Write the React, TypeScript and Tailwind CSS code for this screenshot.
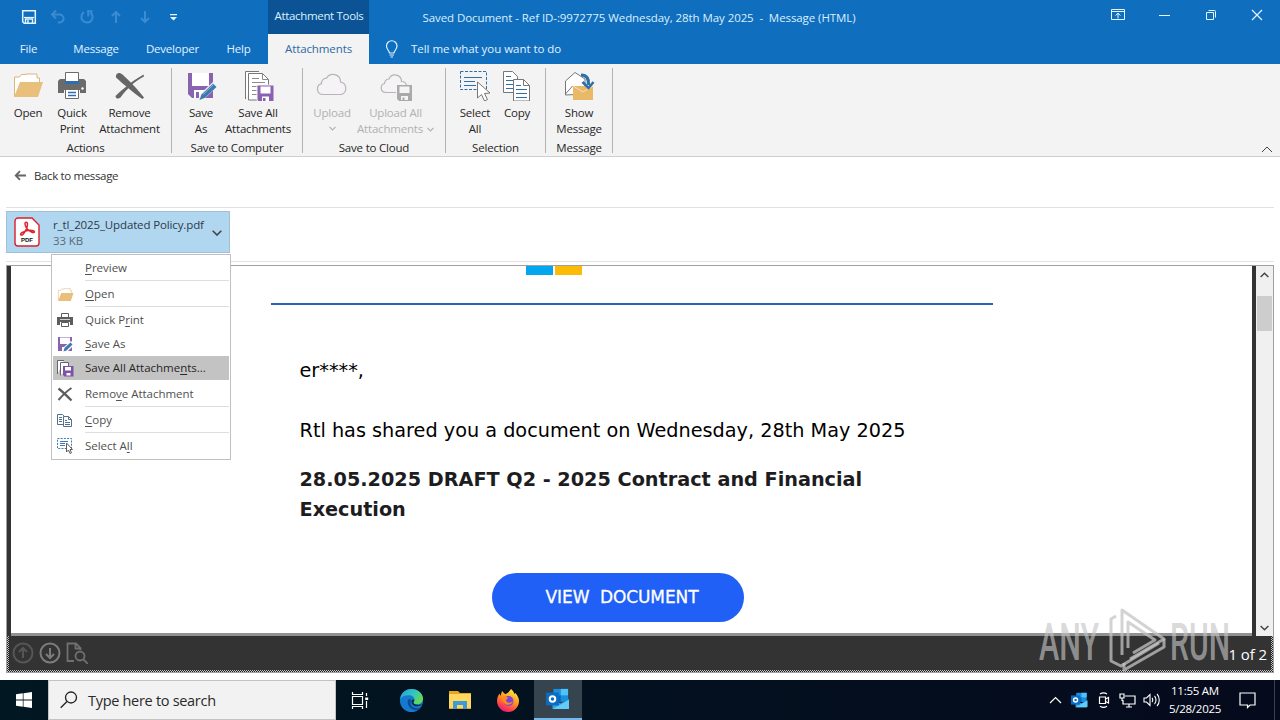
import React from "react";

type IconProps = { className?: string };

/* ---------- Quick access + window icons ---------- */

function SaveGlyph() {
  return (
    <svg width="16" height="16" viewBox="0 0 16 16" fill="none" stroke="#e4f6ff" strokeWidth="1.5">
      <path d="M1.7 1.7h12.6v12.6H3.2L1.7 12.8z" />
      <path d="M3 8.5h10" strokeWidth="1.2" />
      <path d="M4.5 14v-4h7v4M7 11v3" strokeWidth="1.4" />
    </svg>
  );
}

function UndoGlyph() {
  return (
    <svg width="16" height="16" viewBox="0 0 16 16" fill="none" stroke="#3a8cd2" strokeWidth="2">
      <path d="M6 1.500 2 5.500l4 4M2.500 5.500h6.800a4.300 4 0 0 1 0 8H8" />
    </svg>
  );
}

function RedoGlyph() {
  return (
    <svg width="16" height="16" viewBox="0 0 16 16" fill="none" stroke="#3a8cd2" strokeWidth="2">
      <path d="M5 3.200A5.600 5.600 0 1 0 11.500 3.600M8 2.300h5.500M9.300 2v5.500" />
    </svg>
  );
}

function ArrowGlyph({ className }: IconProps) {
  return (
    <svg className={className} width="12" height="14" viewBox="0 0 12 14" fill="none" stroke="#3a8cd2" strokeWidth="2">
      <path d="M6 13V2M2 6l4-4 4 4" />
    </svg>
  );
}

/* ---------- Ribbon icons, 32px grid ---------- */

function FolderIcon({ className = "w-8 h-8" }: IconProps) {
  return (
    <svg className={className} viewBox="0 0 32 32">
      <path d="M2.500 27V8h5l2-2.500H14V5h11v4h2.500v8" fill="#fff" stroke="#dcb67a" strokeWidth="1" />
      <path d="M2 28 8 13h23l-5 15z" fill="#e9c07b" />
    </svg>
  );
}

function PrintIcon({ className = "w-8 h-8" }: IconProps) {
  return (
    <svg className={className} viewBox="0 0 32 32">
      <path d="M4 10h5v4h14v-4h5l2 2v12h-6v-3H8v3H2V12z" fill="#6b6b6b" />
      <path d="M9.500 3.500h13v10h-13z" fill="#fff" stroke="#6b6b6b" />
      <path d="M9 12h14v3H9z" fill="#2f6fb0" />
      <circle cx="26.500" cy="19.500" r="1.200" fill="#fff" />
      <path d="M9.500 20.500h13v9h-13z" fill="#fff" stroke="#6b6b6b" />
      <path d="M12 23.500h8M12 26.500h8" stroke="#2f6fb0" strokeWidth="1.300" />
    </svg>
  );
}

function RemoveIcon({ className = "w-8 h-8" }: IconProps) {
  return (
    <svg className={className} viewBox="0 0 32 32" fill="#666">
      <path d="M2 6.500C2.500 3.500 6 3 8.500 5.500 15 11.500 24 20.500 30 28.500l-1.500 1.500C21 25 9 15 2 8.500z" />
      <path d="M29.500 5.500 28 6.500C18 12 9 20 1.500 27c0 2.500 2.500 3.500 5 1.500C13 20 20 12.500 30 7.500z" />
    </svg>
  );
}

function SaveAsIcon() {
  return (
    <svg className="w-8 h-8" viewBox="0 0 32 32">
      <path d="M3 4h25v25H7l-4-4z" fill="#8a63b0" />
      <path d="M7 4h17v13H7z" fill="#fff" />
      <path d="M9 21h11v8H9z" fill="#fff" />
      <path d="M11 23h3v6h-3z" fill="#8a63b0" />
      <path d="M13 32l2-7L28 13l5 4-13 12z" fill="#f3f3f3" />
      <path d="M14.500 31l2-5.500L28 14.500l3.500 3.500L20 28.800z" fill="#3f77b0" />
      <path d="M18 25.500 28.500 15.500" stroke="#8db7de" />
    </svg>
  );
}

function SaveAllIcon() {
  return (
    <svg className="w-8 h-8" viewBox="0 0 32 32">
      <path d="M3.500 30V2.500H17M6.500 31V4.500h14l6 6V31z" fill="#fff" stroke="#777" />
      <path d="M20.500 4.500v6h6M10 9.500h7M10 13.500h13M10 17.500h7M10 21.500h6M10 25.500h6" fill="none" stroke="#8a8a8a" />
      <path d="M15 16h17v17H17l-2-2z" fill="#8a63b0" stroke="#f3f3f3" />
      <path d="M18.500 17.500h10v7h-10zM20 27.500h7V32h-7z" fill="#fff" />
      <path d="M21 29h2.500v3H21z" fill="#8a63b0" />
    </svg>
  );
}

function CloudIcon() {
  return (
    <svg className="w-8 h-8" viewBox="0 0 32 32" fill="#f5f3f5" stroke="#b7b5b7" strokeWidth="1.200">
      <path d="M7 25.500a5.500 5.500 0 0 1-1.500-10.800 5 5 0 0 1 5-5.500 7.500 7.500 0 0 1 14 3.800 6.500 6.500 0 0 1 1 12.500z" />
    </svg>
  );
}

function CloudSaveIcon() {
  return (
    <svg className="w-8 h-8" viewBox="0 0 32 32">
      <path d="M16 23.500H5.500a4.600 4.600 0 0 1-1-9 4.500 4.500 0 0 1 4.500-4.500 6.500 6.500 0 0 1 12.500 2.500c2.500 0 4.500 1.500 5 3.500" fill="#f5f3f5" stroke="#b7b5b7" strokeWidth="1.200" />
      <path d="M17 16h16v16H19l-2-2z" fill="#aaa" />
      <path d="M19.500 17.500h10v6.500h-10zM21 27h7v4h-7z" fill="#f5f5f5" />
      <path d="M22.500 28.500h2V31h-2z" fill="#aaa" />
    </svg>
  );
}

function SelectIcon() {
  return (
    <svg className="w-8 h-8" viewBox="0 0 32 32">
      <path d="M1.500 2.500h26v18h-26z" fill="none" stroke="#2f6fa8" strokeDasharray="3 1.500" />
      <path d="M5 8.500h18M5 12.500h11M5 16.500h12" stroke="#2f6fa8" />
      <path d="M18.500 13v16l4-3.500 3 6.500 3-1.500-3-6 5.500-.5z" fill="#fff" stroke="#777" />
    </svg>
  );
}

function CopyIcon() {
  return (
    <svg className="w-8 h-8" viewBox="0 0 32 32">
      <path d="M2.500 2.500h9l5 5v16h-14z" fill="#fff" stroke="#777" />
      <path d="M5 7.500h5M5 11.500h9M5 15.500h9M5 19.500h9" stroke="#2f6fa8" />
      <path d="M12.500 10.500h10l6 6V32h-16z" fill="#fff" stroke="#777" />
      <path d="M22.500 10.500v6h6" fill="none" stroke="#777" />
      <path d="M15 16.500h5M15 20.500h11M15 24.500h11M15 28.500h11" stroke="#2f6fa8" />
    </svg>
  );
}

function ShowMessageIcon() {
  return (
    <svg className="w-8 h-8" viewBox="0 0 32 32">
      <path d="M2.500 26V12L12 3.500 22 10v15z" fill="#fff" stroke="#777" />
      <path d="M2.500 25l7-8" fill="none" stroke="#777" />
      <path d="M10 17h20v14H10z" fill="#e9b967" />
      <path d="M10 17l10 6 10-6" fill="none" stroke="#f7e0b8" />
      <path d="M18 6c6 0 8 4 7.500 10" fill="none" stroke="#2f6fa8" strokeWidth="3.200" />
      <path d="M19.500 13l6 6 5-6" fill="none" stroke="#2f6fa8" strokeWidth="2.500" />
    </svg>
  );
}

/* ---------- Menu icons, 16px grid ---------- */

function SmallPrintIcon() {
  return (
    <svg width="16" height="16" viewBox="0 0 16 16">
      <path d="M0 5h16v8h-3v-3H3v3H0z" fill="#5d5d5d" />
      <path d="M4.500 1.500h7v4h-7z" fill="#fff" stroke="#5d5d5d" />
      <path d="M3 7.500h10" stroke="#cfcfcf" />
      <path d="M4.500 10.500h7v4h-7z" fill="#fff" stroke="#5d5d5d" />
    </svg>
  );
}

function SmallSaveAsIcon() {
  return (
    <svg width="16" height="16" viewBox="0 0 16 16">
      <path d="M1 1h14v14H1z" fill="#8a63b0" />
      <path d="M3 1.500h10V8H3zM5 11h6v4H5z" fill="#fff" />
      <path d="M5 16l2-5 7-6 2 2v3l-6 6z" fill="#fff" />
      <path d="M6.500 15.500l1-3.500L13.500 6.500l2 2-6 6z" fill="#3f77b0" />
    </svg>
  );
}

function SmallSaveAllIcon() {
  return (
    <svg width="17" height="17" viewBox="0 0 17 17">
      <path d="M.5 14V.5H7M3.500 15.500v-13h8V7" fill="#fff" stroke="#666" />
      <path d="M6 6h10.500v10.500H7.500L6 15z" fill="#7d52a8" />
      <path d="M8 7h6v3.500H8zM9.500 13h4v2.500h-4z" fill="#fff" />
    </svg>
  );
}

function SmallRemoveIcon() {
  return (
    <svg width="16" height="16" viewBox="0 0 16 16" fill="none" stroke="#5d5d5d">
      <path d="M1.500 2.500C6 6 10 10 14.500 14.500" strokeWidth="2.300" />
      <path d="M14.500 2C9 5.500 5 10 1.500 14" strokeWidth="2" />
    </svg>
  );
}

function SmallCopyIcon() {
  return (
    <svg width="16" height="16" viewBox="0 0 16 16" stroke="#54718c">
      <path d="M.5 2.500h5l2 2v8h-7z" fill="#fff" />
      <path d="M2 5.500h3M2 7.500h3M2 9.500h3" />
      <path d="M6.500 4.500h5l3 3v7h-8z" fill="#fff" />
      <path d="M11.500 4.500v3h3M8 8.500h2M8 10.500h5M8 12.500h5" fill="none" />
    </svg>
  );
}

function SmallSelectIcon() {
  return (
    <svg width="16" height="16" viewBox="0 0 16 16" fill="none" stroke="#3d79b3">
      <path d="M.5.500h14v10H.5z" strokeDasharray="2 1.200" />
      <path d="M3 3.500h8M3 5.500h5M3 7.500h5" />
      <path d="M9.500 5v9l2-2 1.500 3.500 1.500-.7L13 11.500h2.500z" fill="#fff" stroke="#5d5d5d" />
    </svg>
  );
}

function PdfIcon() {
  return (
    <svg width="26" height="30" viewBox="0 0 26 30">
      <path d="M4 1h14l7 7v18a3 3 0 0 1-3 3H4a3 3 0 0 1-3-3V4a3 3 0 0 1 3-3z" fill="#fff" stroke="#d8202a" strokeWidth="1.400" />
      <path d="M11.500 5.500c2-1 2.500 1.500 1.500 4.500-1 3.500-3.500 7.500-5 8-2 .5-2-1.500.5-2.700 3.500-1.800 8.500-2.500 11-1.500 2 1 .5 2.300-1.500 1.500-3-1.200-6-4.500-6.800-7.200-.4-1.300-.3-2.300.3-2.600z" fill="none" stroke="#e0202a" strokeWidth="1.500" />
      <text x="13" y="25" textAnchor="middle" fontFamily="Liberation Sans" fontWeight="700" fontSize="6" letterSpacing="0" fill="#111">PDF</text>
    </svg>
  );
}

/* ---------- Taskbar icons ---------- */

function EdgeIcon() {
  return (
    <svg width="25" height="25" viewBox="0 0 26 26">
      <defs>
        <linearGradient id="edgeTop" x1="0" y1="0" x2="1" y2="0.500">
          <stop offset="0" stopColor="#1f9fe0" />
          <stop offset="0.600" stopColor="#35c6c0" />
          <stop offset="1" stopColor="#62d957" />
        </linearGradient>
      </defs>
      <circle cx="13" cy="13" r="12" fill="#1479cf" />
      <path d="M1 12C2 5 7 1 13 1c7 0 12 5 12 10 0 4-3 6-6 6-3 0-4-1-4-2s1-1.500 1-3c0-2.500-2-4.500-6-4.500-5 0-8 2-9 4.500z" fill="url(#edgeTop)" />
      <path d="M9 14c0 6 5 9 9 9 2 0 4-1 5-3-2 1-4 1.200-6 .8C13 20 11 17 12.500 12 10.500 11 9 12 9 14z" fill="#0b4d8f" />
      <path d="M13 14c0 3 2.500 5 6 5 2 0 4-.5 5-2.500-1 .8-3 1.200-5 1-2.500-.2-4-1.300-4-2.500 0-1 1-1.500 1-3-1.500-.5-3 .5-3 2z" fill="#07263f" />
    </svg>
  );
}

function ExplorerIcon() {
  return (
    <svg width="24" height="22" viewBox="0 0 24 22">
      <path d="M1 2h9l2 2h11v16H1z" fill="#e9a520" />
      <path d="M1 5h22v14H1z" fill="#ffd75e" />
      <path d="M5 12h14v8h-4v-4H9v4H5z" fill="#3f9ad8" />
    </svg>
  );
}

function FirefoxIcon() {
  return (
    <svg width="24" height="25" viewBox="0 0 24 25">
      <defs>
        <linearGradient id="fox" x1="0.800" y1="0" x2="0.300" y2="1">
          <stop offset="0" stopColor="#fff24a" />
          <stop offset="0.450" stopColor="#ff9a1f" />
          <stop offset="0.800" stopColor="#ff3f4e" />
          <stop offset="1" stopColor="#e31587" />
        </linearGradient>
      </defs>
      <path d="M15 1c2 2 3 3 3.500 5l1-1c2.500 3 3.500 5.500 3.500 8A11 11 0 1 1 1 13c0-3 1-5 2.500-7.500L4.500 8 6 3l3 3c2-.5 4-2 6-5z" fill="url(#fox)" />
      <circle cx="12.500" cy="13" r="5" fill="#7a45d8" />
      <path d="M6 10c2-2 5-2 6 0l-2 2c0 3 4 4 7 1-1 5-10 6-11-3z" fill="#ff8a1f" />
    </svg>
  );
}

function OutlookIcon({ className = "w-6 h-[22px]" }: IconProps) {
  return (
    <svg className={className} viewBox="0 0 26 24">
      <path d="M8 1h16v14H8z" fill="#1a8fe0" />
      <path d="M16 1h8v7h-8z" fill="#4fc3f5" />
      <path d="M8 8h8v7H8z" fill="#0f62b5" />
      <path d="M7 13l9 4 9-5v10a1 1 0 0 1-1 1H7z" fill="#2ea6ea" />
      <path d="M7 23l18-10v9a1 1 0 0 1-1 1z" fill="#63cdf8" />
      <path d="M0 5h14v14H0z" fill="#0b6cc4" />
      <circle cx="7" cy="12" r="3" fill="none" stroke="#fff" strokeWidth="2.200" />
    </svg>
  );
}

/* ---------- Ribbon ---------- */

interface RibbonButtonProps {
  icon: React.ReactNode;
  lines: string[];
  width: string;
  disabled?: boolean;
  caret?: boolean;
}

function RibbonButton({ icon, lines, width, disabled, caret }: RibbonButtonProps) {
  return (
    <button className={`${width} shrink-0 flex flex-col items-center ${disabled ? "text-[#b1b1b1]" : "text-[#262626]"}`}>
      <span className="h-[37px] pb-[3px] flex items-center justify-center">{icon}</span>
      {lines.map((line, i) => (
        <span key={line} className="h-4 leading-4 whitespace-nowrap flex items-center gap-1">
          {line}
          {caret && i === 1 && <Chevron className="w-[7px] h-[5px]" />}
        </span>
      ))}
      {caret && lines.length === 1 && <Chevron className="w-[7px] h-[5px] mt-[5px]" />}
    </button>
  );
}

function Chevron({ className }: IconProps) {
  return (
    <svg className={className} viewBox="0 0 10 6" fill="none" stroke="currentColor" strokeWidth="1.600">
      <path d="M.7.700 5 5 9.300.700" />
    </svg>
  );
}

interface RibbonGroupProps {
  label: string;
  width: string;
  padding: string;
  children: React.ReactNode;
}

function RibbonGroup({ label, width, padding, children }: RibbonGroupProps) {
  return (
    <div className={`${width} shrink-0 h-[85px] mt-1 border-r border-[#b3b3b3] flex flex-col`}>
      <div className={`flex h-[73px] shrink-0 items-start ${padding}`}>{children}</div>
      <div className="h-3 leading-[14px] text-center text-[#262626]">{label}</div>
    </div>
  );
}

/* ---------- Context menu ---------- */

const menuItems = [
  { before: "", key: "P", after: "review", icon: null, line: true },
  { before: "", key: "O", after: "pen", icon: <FolderIcon className="w-[17px] h-[17px]" />, line: true },
  { before: "Quick P", key: "r", after: "int", icon: <SmallPrintIcon /> },
  { before: "", key: "S", after: "ave As", icon: <SmallSaveAsIcon /> },
  { before: "Save All Attachme", key: "n", after: "ts...", icon: <SmallSaveAllIcon />, active: true, space: true },
  { before: "Remo", key: "v", after: "e Attachment", icon: <SmallRemoveIcon />, line: true },
  { before: "", key: "C", after: "opy", icon: <SmallCopyIcon />, line: true },
  { before: "Select A", key: "l", after: "l", icon: <SmallSelectIcon /> },
];

function AttachmentMenu() {
  return (
    <div className="absolute left-[45px] top-[43px] z-10 w-[180px] h-[206px] bg-white border border-[#c0c0c0] pt-px px-px tracking-[-0.02px]">
      {menuItems.map((item) => (
        <React.Fragment key={item.before + item.key + item.after}>
          <div className={`h-6 flex items-center ${item.active ? "bg-[#c3c3c3] text-[#262626]" : "text-[#505050]"}`}>
            <span className="w-8 pl-1 flex items-center">{item.icon}</span>
            <span className="whitespace-pre">
              {item.before}
              <span className="underline underline-offset-2">{item.key}</span>
              {item.after}
            </span>
          </div>
          {item.line && <div className="h-0.5 ml-8 border-t border-[#dedede]" />}
          {item.space && <div className="h-0.5" />}
        </React.Fragment>
      ))}
    </div>
  );
}

/* ---------- Sections ---------- */

function TitleBar() {
  return (
    <div className="h-[34px] shrink-0 flex items-stretch bg-[#106ebe] text-[#d8f0ff]">
      <div className="w-[268px] flex items-center pl-[21px] gap-[13px]">
        <SaveGlyph />
        <UndoGlyph />
        <RedoGlyph />
        <ArrowGlyph className="ml-[2px]" />
        <ArrowGlyph className="ml-1 rotate-180" />
        <svg className="ml-1.5" width="7" height="7" viewBox="0 0 7 7" fill="#e4f6ff">
          <path d="M0 0h7v1.200H0zM0 3h7L3.500 6.500z" />
        </svg>
      </div>
      <div className="w-[101px] bg-[#0b5394] flex items-center justify-center pb-0.5 pl-px whitespace-nowrap tracking-[-0.33px]">Attachment Tools</div>
      <div className="w-[540px] flex items-center justify-center whitespace-pre pt-0.5 tracking-[-0.08px]">
        Saved Document - Ref ID-:9972775 Wednesday, 28th May 2025  -  Message (HTML)
      </div>
      <div className="flex-1 flex items-center justify-end pr-[17px] pb-1">
        <svg width="14" height="12" viewBox="0 0 14 12" fill="none" stroke="#e4f6ff">
          <path d="M.5.500h13v10H.5zM.5 2.500h13M7 9.500V4M4.500 6.500 7 4.200l2.500 2.300" />
        </svg>
        <svg className="ml-[34px]" width="11" height="11" viewBox="0 0 11 11" stroke="#e4f6ff">
          <path d="M0 5.500h11" />
        </svg>
        <svg className="ml-[35px]" width="12" height="12" viewBox="0 0 12 12" fill="none" stroke="#e4f6ff">
          <path d="M1.500 3.500h7v7h-7zM3.500 1.500h6a1 1 0 0 1 1 1v6" />
        </svg>
        <svg className="ml-[34px]" width="12" height="12" viewBox="0 0 12 12" fill="none" stroke="#e4f6ff" strokeWidth="1.200">
          <path d="M1 1l10 10M11 1 1 11" />
        </svg>
      </div>
    </div>
  );
}

function TabBar() {
  return (
    <div className="h-[30px] shrink-0 flex bg-[#106ebe] text-[#e0f3ff] leading-[30px] whitespace-nowrap">
      <div className="w-[57px] text-center">File</div>
      <div className="w-[78px] text-center">Message</div>
      <div className="w-[76px] text-center pr-px">Developer</div>
      <div className="w-[57px] text-center pr-0.5">Help</div>
      <div className="w-[101px] text-center tracking-[-0.1px] bg-[#f3f3f3] text-[#2f6aa3]">Attachments</div>
      <div className="flex items-center pl-4">
        <svg width="14" height="18" viewBox="0 0 14 18" fill="none" stroke="#e4f6ff" strokeWidth="1.200">
          <path d="M4.500 13c0-2-3-3.500-3-7a5.200 5.200 0 0 1 10.500 0c0 3.500-3 5-3 7zM4.500 15h4.500M5.500 17h2.500" />
        </svg>
        <span className="ml-3 tracking-[-0.04px]">Tell me what you want to do</span>
      </div>
    </div>
  );
}

function Ribbon() {
  return (
    <div className="h-[93px] shrink-0 flex bg-[#f3f3f3] border-b border-[#cfcfcf]">
      <RibbonGroup label="Actions" width="w-[172px]" padding="pl-[7px]">
        <RibbonButton icon={<FolderIcon />} lines={["Open"]} width="w-[42px]" />
        <RibbonButton icon={<PrintIcon />} lines={["Quick", "Print"]} width="w-[46px]" />
        <RibbonButton icon={<RemoveIcon />} lines={["Remove", "Attachment"]} width="w-[69px]" />
      </RibbonGroup>
      <RibbonGroup label="Save to Computer" width="w-[131px]" padding="pl-[10px]">
        <RibbonButton icon={<SaveAsIcon />} lines={["Save", "As"]} width="w-[38px]" />
        <RibbonButton icon={<SaveAllIcon />} lines={["Save All", "Attachments"]} width="w-[76px]" />
      </RibbonGroup>
      <RibbonGroup label="Save to Cloud" width="w-[143px]" padding="pl-[4px]">
        <RibbonButton icon={<CloudIcon />} lines={["Upload"]} width="w-[50px]" disabled caret />
        <RibbonButton icon={<CloudSaveIcon />} lines={["Upload All", "Attachments"]} width="w-[77px]" disabled caret />
      </RibbonGroup>
      <RibbonGroup label="Selection" width="w-[100px]" padding="pl-[10px]">
        <RibbonButton icon={<SelectIcon />} lines={["Select", "All"]} width="w-[38px]" />
        <RibbonButton icon={<CopyIcon />} lines={["Copy"]} width="w-[46px]" />
      </RibbonGroup>
      <RibbonGroup label="Message" width="w-[67px]" padding="pl-[8px]">
        <RibbonButton icon={<ShowMessageIcon />} lines={["Show", "Message"]} width="w-[50px]" />
      </RibbonGroup>
      <svg className="ml-auto mr-[7px] mt-[82px]" width="12" height="7" viewBox="0 0 12 7" fill="none" stroke="#444">
        <path d="M1 6l5-5 5 5" />
      </svg>
    </div>
  );
}

function AttachmentStrip() {
  return (
    <div className="h-[55px] shrink-0 mx-[6px] border-y border-[#e1e1e1] pt-[3px]">
      <div className="relative w-[224px]">
        <div className="h-[42px] bg-[#b1d6f0] border border-[#9fc0d8] flex items-center">
          <span className="ml-[7px]"><PdfIcon /></span>
          <div className="ml-[13px] pt-[2px] flex-1 leading-4 whitespace-nowrap tracking-[-0.13px]">
            <div className="text-[#2c3a4a]">r_tl_2025_Updated Policy.pdf</div>
            <div className="text-[#5b6b78]">33 KB</div>
          </div>
          <Chevron className="w-[10px] h-[6px] mr-[7px] mt-[2px] text-[#444]" />
        </div>
        <AttachmentMenu />
      </div>
    </div>
  );
}

function DocumentViewer() {
  return (
    <div className="h-[408px] mt-[3px] mx-[6px] shrink-0 border border-[#a0a0a0] flex flex-col bg-[#333]">
      <div className="h-[370px] flex">
        <div className="w-[1241px] mx-1 h-[370px] bg-white border-b-[3px] border-[#8f9290] text-black font-['DejaVu_Sans'] text-[19.25px] tracking-normal">
          <div className="flex gap-[2px] ml-[515px]">
            <div className="w-[27px] h-[9px] bg-[#05a6f0]" />
            <div className="w-[27px] h-[9px] bg-[#fcbb06]" />
          </div>
          <div className="ml-[260px] mt-7 w-[722px] h-0.5 bg-[#2b63b8]" />
          <div className="ml-[288.5px] w-[620px]">
            <p className="mt-[51px] leading-[30px]">er****,</p>
            <p className="mt-[30px] leading-[30px] whitespace-nowrap">Rtl has shared you a document on Wednesday, 28th May 2025</p>
            <p className="mt-[19px] leading-[30px] font-bold text-[#1d1d1f] tracking-[-0.02px]">
              28.05.2025 DRAFT Q2 - 2025 Contract and Financial Execution
            </p>
          </div>
          <button className="ml-[481px] mt-[48px] w-[252px] h-[49px] rounded-full bg-[#2160f6] text-white text-[17px] tracking-[-0.1px] [-webkit-text-stroke:0.3px_white] whitespace-pre flex items-center justify-center pl-2 pt-px">
            VIEW  DOCUMENT
          </button>
        </div>
        <div className="w-[17px] bg-[#f0f0f0] flex flex-col items-center text-[#444]">
          <Chevron className="w-[9px] h-[6px] mt-[6px] rotate-180" />
          <div className="w-[15px] h-[35px] mt-[18px] bg-[#cdcdcd]" />
          <Chevron className="w-[9px] h-[6px] mt-auto mb-[5px]" />
        </div>
      </div>
      {/* focus dither around the page toolbar */}
      <div className="h-9 px-0.5 pb-0.5 bg-[repeating-conic-gradient(#c4c4c4_0_25%,#222_0_50%)] bg-[length:2px_2px]">
        <div className="relative h-full bg-[#333] flex items-center pl-[3px] gap-[5px]">
          <svg width="22" height="22" viewBox="0 0 22 22" fill="none" stroke="#565656" strokeWidth="2">
            <circle cx="11" cy="11" r="9.500" />
            <path d="M11 16V6M7 10l4-4 4 4" />
          </svg>
          <svg width="22" height="22" viewBox="0 0 22 22" fill="none" stroke="#7c7c7c" strokeWidth="2">
            <circle cx="11" cy="11" r="9.500" />
            <path d="M11 6v10M7 12l4 4 4-4" />
          </svg>
          <svg width="22" height="22" viewBox="0 0 22 22" fill="none" stroke="#707070" strokeWidth="1.800">
            <path d="M8 19H1.500V1.500H10L14.500 6v2M9.500 2v4.500H14" />
            <circle cx="14" cy="14" r="4.500" />
            <path d="M17.500 17.500 22 22" />
          </svg>
          <Watermark />
          <span className="ml-auto mr-[4px] pt-0.5 text-white text-[15px] tracking-[-0.1px] whitespace-nowrap">1 of 2</span>
        </div>
      </div>
    </div>
  );
}

function Watermark() {
  return (
    <svg
      className="absolute right-[40px] bottom-0 w-[200px] h-[66px] overflow-visible tracking-normal"
      viewBox="0 0 200 66"
      fontFamily="Roboto"
      fontWeight="500"
      fontSize="51"
      fill="#c4c4c4"
      fillOpacity="0.650"
    >
      <text x="8" y="56" textLength="60" lengthAdjust="spacingAndGlyphs">ANY</text>
      <text x="139" y="56" textLength="60" lengthAdjust="spacingAndGlyphs">RUN</text>
      <g fill="none" stroke="#c4c4c4" strokeOpacity="0.750" strokeWidth="3" strokeLinejoin="round">
        <path d="M85 12l-5 3v42l10 5 38-23" />
        <path d="M91 51V6l42 29-34 20" />
        <path d="M97 44V18l27 18-22 13" />
        <path d="M133 35v8L93 66v-7" />
      </g>
    </svg>
  );
}

function Taskbar() {
  return (
    <div className="h-10 mt-auto shrink-0 flex bg-linear-to-r from-[#011722] to-[#050a1c] text-white">
      <div className="w-12 flex items-center justify-center">
        <svg width="16" height="16" viewBox="0 0 16 16" fill="#fff">
          <path d="M0 2.300 6.800 1.300v6.300H0zM7.500 1.200 16 0v7.600H7.500zM0 8.400h6.800v6.300L0 13.700zM7.500 8.400H16V16l-8.500-1.200z" />
        </svg>
      </div>
      <div className="w-72 bg-[#f2f2f2] border border-[#c4c4c4] flex items-center pl-[11px] text-[#2a2a2a]">
        <svg width="18" height="18" viewBox="0 0 18 18" fill="none" stroke="#222" strokeWidth="1.300">
          <circle cx="11" cy="6.500" r="5.500" />
          <path d="M7 10.500.700 16.800" />
        </svg>
        <span className="ml-[10px] pt-0.5 text-[14.5px] tracking-[-0.3px]">Type here to search</span>
      </div>
      <div className="w-12 flex items-center justify-center">
        <svg width="18" height="17" viewBox="0 0 18 17" fill="none" stroke="#fff" strokeWidth="1.200">
          <path d="M1.500 4.500h10v8h-10zM1.500 0v2.500h10V0M1.500 17v-2.500h10V17M15.500 1v3M15.500 9v7" />
          <path d="M14.200 5.500h3v2.500h-3z" fill="#fff" stroke="none" />
        </svg>
      </div>
      <div className="w-[54px] flex items-center justify-center"><EdgeIcon /></div>
      <div className="w-[44px] flex items-center justify-center"><ExplorerIcon /></div>
      <div className="w-[52px] flex items-center justify-center"><FirefoxIcon /></div>
      <div className="w-12 flex items-center justify-center bg-[#35444e] border-b-2 border-[#76b9ed]"><OutlookIcon /></div>

      <div className="ml-auto flex items-center">
        <svg width="13" height="8" viewBox="0 0 13 8" fill="none" stroke="#fff" strokeWidth="1.200">
          <path d="M1 7l5.500-5.500L12 7" />
        </svg>
        <OutlookIcon className="w-[17px] h-4 ml-[9px]" />
        <svg className="ml-[9px]" width="14" height="16" viewBox="0 0 14 16" fill="none" stroke="#fff" strokeWidth="1.200">
          <path d="M2.500 5h6v6.500h-6zM8.500 7l3-1.500v5.500l-3-1.500M3 2c2-1.300 5-1.300 7 0M3 14.300c2 1.300 5 1.300 7 0" />
        </svg>
        <svg className="ml-[8px]" width="17" height="15" viewBox="0 0 17 15" fill="none" stroke="#fff" strokeWidth="1.200">
          <path d="M6 3h10v8H4V7M10 11v3M7 14h6M1 1h4v4H1zM3 5v3" />
        </svg>
        <svg className="ml-[7px]" width="18" height="14" viewBox="0 0 18 14" fill="none" stroke="#fff" strokeWidth="1.100">
          <path d="M1 5h2.500L7 1.500v11L3.500 9H1zM9 5c1 1 1 3 0 4M11.500 3c2 2 2 6 0 8M14 1c3 3 3 9 0 12" />
        </svg>
        <div className="w-[60px] ml-[4px] text-center leading-[18px] whitespace-nowrap tracking-[-0.25px]">
          <div>11:55 AM</div>
          <div>5/28/2025</div>
        </div>
        <svg className="ml-[14px] mr-[18px]" width="17" height="17" viewBox="0 0 17 17" fill="none" stroke="#fff" strokeWidth="1.200">
          <path d="M1 1h15v12h-5l-2.500 2.500V13H1z" />
        </svg>
        <div className="h-10 w-px mr-[5px] bg-[#39404f]" />
      </div>
    </div>
  );
}

export default function App() {
  return (
    <div className="w-[1280px] h-[720px] overflow-hidden bg-white flex flex-col font-['Open_Sans','Noto_Sans',sans-serif] text-[11.5px] tracking-[-0.2px]">
      <TitleBar />
      <TabBar />
      <Ribbon />
      <div className="h-[50px] shrink-0 flex items-start pt-[11px] pl-[14px] text-[#333]">
        <svg className="mt-[2px]" width="13" height="11" viewBox="0 0 13 11" fill="none" stroke="#666" strokeWidth="1.800">
          <path d="M12 5.500H2M6 1.200 1.700 5.500 6 9.800" />
        </svg>
        <span className="ml-[7px] leading-4 tracking-[-0.36px]">Back to message</span>
      </div>
      <AttachmentStrip />
      <DocumentViewer />
      <Taskbar />
    </div>
  );
}
